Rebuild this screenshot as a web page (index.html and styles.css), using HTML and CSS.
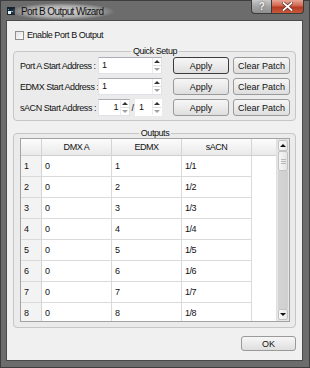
FILE: index.html
```html
<!DOCTYPE html>
<html lang="en">
<head>
  <meta charset="UTF-8">
  <title>Port B Output Wizard</title>
  <link rel="stylesheet" href="styles.css">
</head>
<body>
  <div class="window">
    <!-- title bar -->
    <div class="titlebar">
      <svg class="app-icon" width="8" height="8" viewBox="0 0 8 8">
        <rect width="8" height="8" fill="#16222e"/>
        <rect x="1" y="4" width="3" height="3" fill="#e8f4f8"/>
        <rect x="4" y="4" width="2" height="1" fill="#3fb4d8"/>
        <rect x="1" y="2" width="1" height="1" fill="#3fb4d8"/>
      </svg>
      <span class="title">Port B Output Wizard</span>
      <div class="caption-btns">
        <span class="cap-btn help">?</span>
        <span class="cap-btn close">
          <svg width="11" height="9" viewBox="0 0 11 9">
            <path d="M1.5 1 L9.5 8 M9.5 1 L1.5 8" stroke="#5a2a20" stroke-width="3.2" stroke-linecap="square"/>
            <path d="M1.5 1 L9.5 8 M9.5 1 L1.5 8" stroke="#fff" stroke-width="1.8" stroke-linecap="square"/>
          </svg>
        </span>
      </div>
    </div>

    <div class="client">
      <label class="check-row"><span class="checkbox"></span>Enable Port B Output</label>

      <fieldset class="group quick">
        <legend>Quick Setup</legend>
        <div class="qs-row">
          <span class="qs-label">Port A Start Address :</span>
          <div class="spin">
            <span class="spin-val">1</span>
            <span class="spin-arrows"><i class="up"></i><i class="down"></i></span>
          </div>
          <button class="btn apply default">Apply</button>
          <button class="btn clear">Clear Patch</button>
        </div>
        <div class="qs-row">
          <span class="qs-label">EDMX Start Address :</span>
          <div class="spin">
            <span class="spin-val">1</span>
            <span class="spin-arrows"><i class="up"></i><i class="down"></i></span>
          </div>
          <button class="btn apply">Apply</button>
          <button class="btn clear">Clear Patch</button>
        </div>
        <div class="qs-row">
          <span class="qs-label">sACN Start Address :</span>
          <div class="spin-pair">
            <div class="spin small">
              <span class="spin-val right">1</span>
              <span class="spin-arrows"><i class="up"></i><i class="down"></i></span>
            </div>
            <span class="slash">/</span>
            <div class="spin small flat">
              <span class="spin-val">1</span>
              <span class="spin-arrows"><i class="up"></i><i class="down"></i></span>
            </div>
          </div>
          <button class="btn apply">Apply</button>
          <button class="btn clear">Clear Patch</button>
        </div>
      </fieldset>

      <fieldset class="group outputs">
        <legend>Outputs</legend>
        <div class="table-frame">
          <div class="grid">
            <div class="hd corner"></div>
            <div class="hd">DMX A</div>
            <div class="hd">EDMX</div>
            <div class="hd">sACN</div>
            <div class="hd filler"></div>

            <div class="rh">1</div><div class="cell">0</div><div class="cell">1</div><div class="cell">1/1</div><div class="blank"></div>
            <div class="rh">2</div><div class="cell">0</div><div class="cell">2</div><div class="cell">1/2</div><div class="blank"></div>
            <div class="rh">3</div><div class="cell">0</div><div class="cell">3</div><div class="cell">1/3</div><div class="blank"></div>
            <div class="rh">4</div><div class="cell">0</div><div class="cell">4</div><div class="cell">1/4</div><div class="blank"></div>
            <div class="rh">5</div><div class="cell">0</div><div class="cell">5</div><div class="cell">1/5</div><div class="blank"></div>
            <div class="rh">6</div><div class="cell">0</div><div class="cell">6</div><div class="cell">1/6</div><div class="blank"></div>
            <div class="rh">7</div><div class="cell">0</div><div class="cell">7</div><div class="cell">1/7</div><div class="blank"></div>
            <div class="rh">8</div><div class="cell">0</div><div class="cell">8</div><div class="cell">1/8</div><div class="blank"></div>
          </div>
          <div class="vscroll">
            <span class="sb-btn"><i class="up"></i></span>
            <span class="sb-thumb"><b></b><b></b><b></b></span>
            <span class="sb-track"></span>
            <span class="sb-btn"><i class="down"></i></span>
          </div>
        </div>
      </fieldset>

      <div class="footer">
        <button class="btn ok">OK</button>
      </div>
    </div>
  </div>
</body>
</html>
```

FILE: styles.css
```css
body{
  margin: 0;
  font-family: "Liberation Sans", sans-serif;
  font-size: 9px; letter-spacing: -0.45px; color: #111;
}
.window{
  width: 310px; height: 368px; box-sizing: border-box;
  display: flex; flex-direction: column;
  padding: 0 6px 6px 5px;
  background: #6c6c6c; border: 1px solid #3e3e3e;
}

/* title bar */
.titlebar{
  height: 19px; display: flex; align-items: flex-start;
}
.app-icon{
  margin: 6px 0 0 1px; flex: none;
}
.title{
  margin: 2px 0 0 -6px; padding: 3px 12px;
  font-size: 10px; line-height: 11px; letter-spacing: -0.6px; color: #111;
  background: radial-gradient(closest-side, rgba(225,225,225,.9), rgba(215,215,215,.6) 65%, rgba(200,200,200,0));
}
.caption-btns{
  margin: -1px -1px 0 auto; display: flex;
}
.cap-btn{
  height: 13px; border: 1px solid #3a3a3a; border-top: none;
  display: flex; align-items: center; justify-content: center;
}
.cap-btn.help{
  width: 19px; border-right: none; border-radius: 0 0 0 4px;
  background: linear-gradient(#c9c9c9, #a4a4a4 50%, #8f8f8f);
  color: #f4f4f4; font: bold 10px "Liberation Sans", sans-serif;
  text-shadow: 0 0 2px #444;
}
.cap-btn.close{
  width: 31px; border-radius: 0 0 4px 0;
  background: linear-gradient(#e9a696, #d0644c 45%, #b63a22 55%, #c85a3c);
}

/* client area */
.client{
  flex: 1; box-sizing: border-box; overflow: hidden;
  background: #f0f0f0; border: 1px solid #4a4a4a;
}
.check-row{
  display: flex; align-items: center; gap: 3px;
  height: 14px; margin: 7px 0 0 8px;
}
.checkbox{
  width: 7px; height: 7px;
  border: 1px solid #8e8f8f;
  background: linear-gradient(135deg, #e4e4e4, #fbfbfb);
}

/* group boxes */
.group{
  margin: 4px 6px 0 6px; padding: 1px 5px 4px 6px; min-width: 0;
  border: 1px solid #c6c6c6; border-radius: 4px;
  background: #ebebeb;
}
.group legend{
  margin: 0 auto; padding: 0 2px;
  line-height: 10px; height: 10px;
}
.group.outputs{
  margin-top: 7px; padding: 0 5px 5px 6px;
}

/* quick setup rows */
.qs-row{
  display: flex; align-items: center; height: 17px;
}
.qs-row + .qs-row{
  margin-top: 4px;
}
.qs-label{
  width: 78px; flex: none; white-space: nowrap;
}
.spin, .spin-pair{
  width: 64px; height: 17px; box-sizing: border-box; flex: none;
}
.spin{
  display: flex; background: #fff;
  border: 1px solid #e0e2e8; border-top-color: #abadb3;
}
.spin-val{
  flex: 1; padding-left: 3px; line-height: 15px;
}
.spin-val.right{
  text-align: right; padding: 0 2px 0 0;
}
.spin-arrows{
  width: 8px; display: flex; flex-direction: column;
  border-left: 1px solid #ececec;
}
.spin-arrows i{
  flex: 1; display: flex; align-items: center; justify-content: center;
}
.spin-arrows i + i{
  border-top: 1px solid #dcdcdc;
}
.spin-arrows i::after, .sb-btn i::after{
  content: ""; display: block; border: 3px solid transparent;
}
.spin-arrows .up::after{
  border-top: none; border-bottom: 3px solid #333;
}
.spin-arrows .down::after{
  border-bottom: none; border-top: 3px solid #a0a0a0;
}
.spin-pair{
  display: flex; align-items: center;
}
.spin.small{
  width: 32px;
}
.slash{
  width: 5px; text-align: center; flex: none;
}
.spin.small.flat{
  width: 27px; border-color: #fff;
}

/* buttons */
.btn{
  height: 17px; padding: 0; box-sizing: border-box;
  font: inherit; color: #111; white-space: nowrap;
  border: 1px solid #9a9a9a; border-radius: 3px;
  background: linear-gradient(#f6f6f6, #ebebeb 50%, #dedede);
}
.btn.apply{
  width: 56px; margin-left: 11px;
}
.btn.clear{
  width: 57px; margin-left: 4px;
}
.btn.default{
  border-color: #3b3b3b;
}

/* outputs table */
.table-frame{
  height: 184px; box-sizing: border-box; overflow: hidden;
  display: flex; background: #fff; border: 1px solid #a3a3a3;
}
.grid{
  flex: 1; display: grid;
  grid-template-columns: 21px 70px 70px 70px 1fr;
  grid-template-rows: 17px; grid-auto-rows: 21px;
}
.grid > div{
  box-sizing: border-box; line-height: 20px;
}
.hd{
  line-height: 16px !important; text-align: center;
  background: linear-gradient(#fcfcfc, #f1f1f1 60%, #e9e9e9);
  border-right: 1px solid #d5d5d5; border-bottom: 1px solid #d0d0d0;
}
.hd.filler{
  border-right: none;
}
.rh{
  padding-left: 3px; background: #f3f3f3;
  border-right: 1px solid #d5d5d5; border-bottom: 1px solid #dadada;
}
.cell{
  padding-left: 3px;
  border-right: 1px solid #dadada; border-bottom: 1px solid #dadada;
}
.vscroll{
  width: 12px; flex: none; display: flex; flex-direction: column;
  background: #e6e6e6; border-left: 1px solid #e0e0e0;
}
.sb-btn{
  height: 11px; margin: 1px 1px 0; box-sizing: border-box;
  display: flex; align-items: center; justify-content: center;
  background: linear-gradient(90deg, #fafafa, #e8e8e8);
  border: 1px solid #c2c2c2; border-radius: 2px;
}
.sb-btn:last-child{
  margin: 0 1px 1px;
}
.sb-btn .up::after{
  border-top: none; border-bottom: 3px solid #111;
}
.sb-btn .down::after{
  border-bottom: none; border-top: 3px solid #111;
}
.sb-thumb{
  height: 20px; margin: 0 1px; box-sizing: border-box;
  display: flex; flex-direction: column; align-items: center; justify-content: center; gap: 1px;
  background: linear-gradient(90deg, #f6f6f6, #e4e4e4);
  border: 1px solid #c2c2c2; border-radius: 2px;
}
.sb-thumb b{
  width: 5px; height: 1px; background: #b8b8b8;
}
.sb-track{
  flex: 1; margin: 0 1px;
  background: linear-gradient(90deg, #d4d4d4, #cfcfcf);
}

.footer{
  display: flex; justify-content: flex-end;
  margin: 8px 6px 0 0;
}
.btn.ok{
  width: 55px; height: 15px;
}
```
